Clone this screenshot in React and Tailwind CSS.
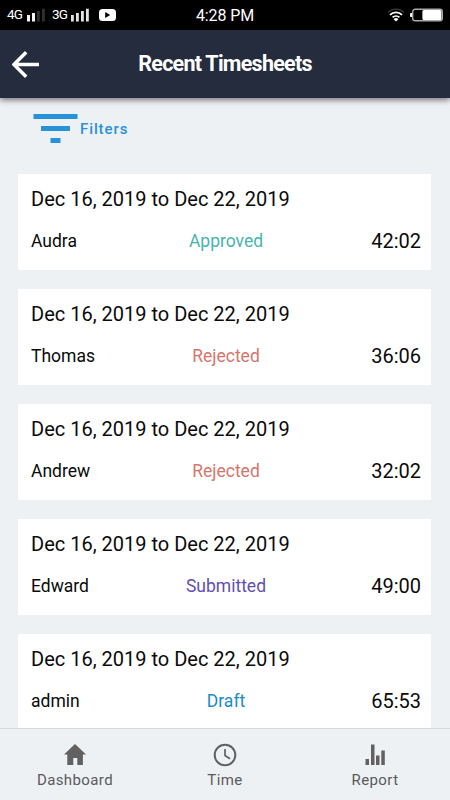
const timesheets = [
  { name: 'Audra', status: 'Approved', hours: '42:02' },
  { name: 'Thomas', status: 'Rejected', hours: '36:06' },
  { name: 'Andrew', status: 'Rejected', hours: '32:02' },
  { name: 'Edward', status: 'Submitted', hours: '49:00' },
  { name: 'admin', status: 'Draft', hours: '65:53' },
];

const statusColors = {
  Approved: 'text-[#45b5ae]',
  Rejected: 'text-[#d6766b]',
  Submitted: 'text-[#5f4fb3]',
  Draft: 'text-[#1a8bcb]',
};

function StatusBar() {
  return (
    <div className="flex h-[30px] shrink-0 items-center bg-black pl-[7px] pr-[7px] text-white">
      <div className="flex flex-1 items-center">
        <span className="w-[16px] text-[13.5px] leading-none tracking-[-0.8px]">4G</span>
        <svg width="18" height="14" viewBox="0 0 18 14" className="ml-1">
          <path d="M0 7h3v6.5H0zM5 5h3v8.5H5z" fill="#f4f4f4" />
          <path d="M10 3h2.8v10.5H10zM15 .7h2.8v12.8H15z" fill="#2f2f2f" />
        </svg>
        <span className="ml-[7px] w-[15px] text-[13.5px] leading-none tracking-[-0.8px]">3G</span>
        <svg width="18" height="14" viewBox="0 0 18 14" className="ml-1">
          <path d="M0 7h2.8v6.5H0zM5 5h2.8v8.5H5zM10 3h2.8v10.5H10zM15 .7h2.8v12.8H15z" fill="#e4e4e4" />
        </svg>
        <svg width="17" height="12" viewBox="0 0 17 12" className="ml-[10px]">
          <rect width="17" height="12" rx="3.5" fill="#fff" />
          <path d="M6.2 3l5 3-5 3z" fill="#000" />
        </svg>
      </div>
      <span className="pt-[2px] text-[16px] leading-none tracking-[-0.1px]">4:28 PM</span>
      <div className="flex flex-1 items-center justify-end">
        <svg width="18" height="14" viewBox="0 0 18 14" fill="none" strokeWidth="1.8">
          <path d="M1 4.4a11.5 11.5 0 0 1 16 0" stroke="#3a3a3a" strokeWidth="1.3" />
          <path d="M3 6.8a8.6 8.6 0 0 1 12 0M5.6 9.4a5 5 0 0 1 6.8 0" stroke="#fff" />
          <path d="M9 13.4l-2.4-2.2a3.4 3.4 0 0 1 4.8 0z" fill="#fff" />
        </svg>
        <svg width="33" height="14" viewBox="0 0 33 14" className="ml-[5px]">
          <rect x="0" y="5" width="3" height="4" rx="1" fill="#fff" />
          <rect x="2.7" y="1.2" width="29.6" height="11.6" rx="2.5" fill="#000" stroke="#aaa" strokeWidth="1.4" />
          <rect x="12.4" y="2" width="19" height="10" rx="1.5" fill="#fff" />
        </svg>
      </div>
    </div>
  );
}

function Header() {
  return (
    <div className="relative z-10 flex h-[68px] shrink-0 items-center bg-[#242c3d] px-3 text-white shadow-[0_2px_6px_rgba(40,20,50,0.6)]">
      <svg width="27" height="28" viewBox="0 0 27 28" fill="none" stroke="#fff" strokeWidth="3.4">
        <path d="M27 14.5H2.5M14.2 2.2L2 14.5l12.2 12.3" />
      </svg>
      <h1 className="flex-1 pr-[27px] text-center text-[21.5px] font-bold leading-none tracking-[-0.75px]">
        Recent Timesheets
      </h1>
    </div>
  );
}

function TimesheetCard({ item }) {
  return (
    <div className="h-24 shrink-0 bg-white pl-[13px] pr-[10px] pt-3">
      <p className="text-[20px] leading-[26px]">Dec 16, 2019 to Dec 22, 2019</p>
      <div className="mt-[17px] grid grid-cols-[130px_130px_130px] items-center leading-6">
        <span className="text-[17.5px]">{item.name}</span>
        <span className={`text-center text-[17.5px] ${statusColors[item.status]}`}>{item.status}</span>
        <span className="text-right text-[20px]">{item.hours}</span>
      </div>
    </div>
  );
}

function NavItem({ label, children }) {
  return (
    <button className="flex flex-1 flex-col items-center pt-[14px]">
      <svg width="24" height="24" viewBox="0 0 24 24" fill="#616161">
        {children}
      </svg>
      <span className="mt-[4px] text-[15px] leading-[18px] tracking-[0.4px] text-[#5a5a5a]">{label}</span>
    </button>
  );
}

export default function App() {
  return (
    <div className="flex h-[800px] w-[450px] flex-col overflow-hidden bg-[#edf1f4] font-['Roboto',sans-serif] text-[#0a0a0a]">
      <StatusBar />
      <Header />

      <div className="flex min-h-0 flex-1 flex-col overflow-hidden pl-[18px] pr-[19px]">
        <button className="mb-[31px] mt-4 flex shrink-0 items-center pl-[15px] text-[#2792d8]">
          <svg width="45" height="29" viewBox="0 0 45 29" fill="currentColor">
            <path d="M.5 0h44v5H.5zM8 12h29v5H8zM17.5 24h10v5h-10z" />
          </svg>
          <span className="ml-[2px] pt-[1px] text-[15px] font-medium leading-none tracking-[0.9px]">Filters</span>
        </button>
        <div className="flex flex-col gap-[19px]">
          {timesheets.map((item) => (
            <TimesheetCard key={item.name} item={item} />
          ))}
        </div>
      </div>

      <div className="flex h-[72px] shrink-0 border-t border-[#d5d9dd] bg-[#edf1f4]">
        <NavItem label="Dashboard">
          <path d="M12 1L1 11.6h3.3V22h6v-7h4v7h5.6V11.6H23z" />
        </NavItem>
        <NavItem label="Time">
          <circle cx="12" cy="12" r="10.3" fill="none" stroke="#616161" strokeWidth="2" />
          <path d="M12 6v6.5l5 3.2" fill="none" stroke="#616161" strokeWidth="1.7" />
        </NavItem>
        <NavItem label="Report">
          <path d="M2.5 16H6v6H2.5zM8 1.5h3.5V22H8zM13 12.5h3.5V22H13zM18.3 7.5h3.5V22h-3.5z" />
        </NavItem>
      </div>
    </div>
  );
}
